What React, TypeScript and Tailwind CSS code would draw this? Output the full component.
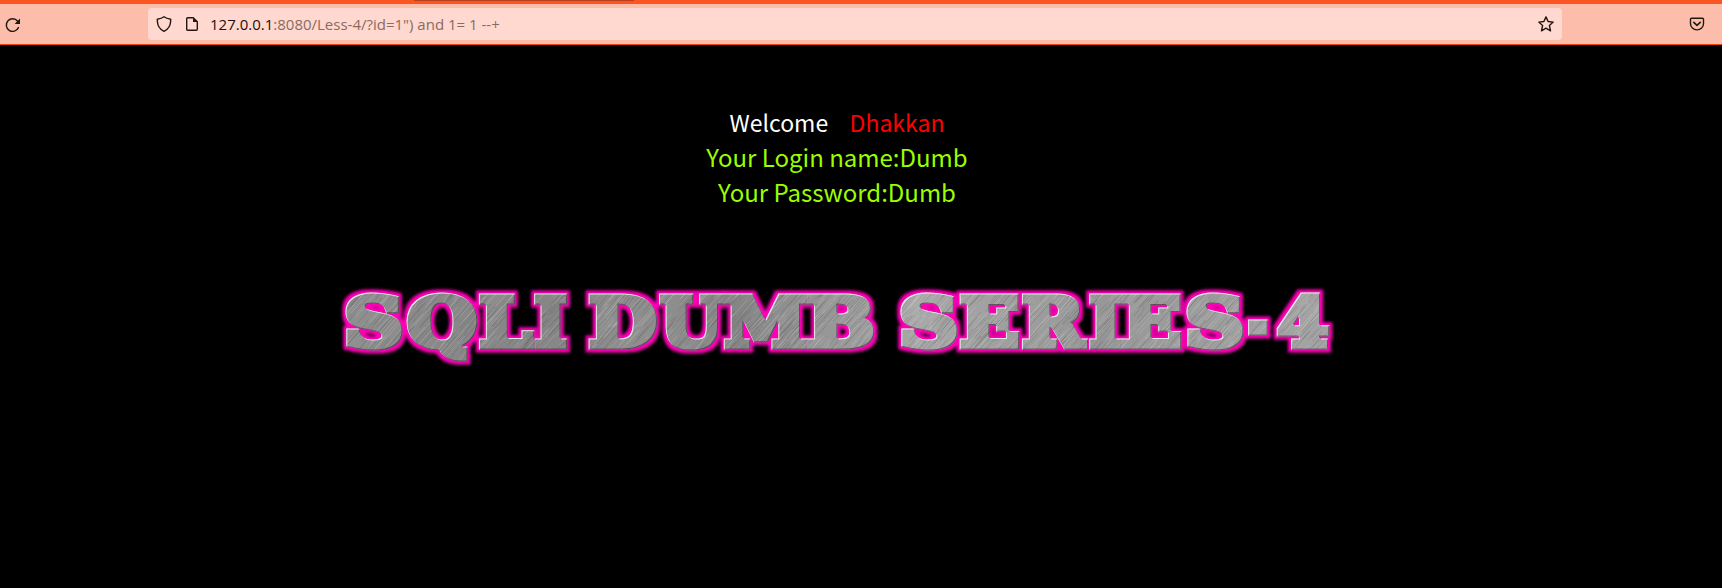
import { useState } from "react";

const FACE = '"DejaVu Serif", serif';
const SIZE = 68;
const STROKE = 7;

// glyph, left edge of ink, ink width
const LETTERS: [string, number, number][] = [
  ["S", 26, 56], ["Q", 87, 70], ["L", 159, 55], ["I", 214, 33], [" ", 248, 20],
  ["D", 269, 68], ["U", 339, 66], ["M", 404, 83], ["B", 487, 67], [" ", 560, 20],
  ["S", 581, 56], ["E", 640, 59], ["R", 702, 66], ["I", 769, 33], ["E", 802, 59],
  ["S", 867, 56], ["-", 927, 22], ["4", 957, 52],
];

function fitLetters() {
  const ctx = document.createElement("canvas").getContext("2d")!;
  ctx.font = `bold 200px ${FACE}`;
  return LETTERS.map(([ch, x, w]) => {
    if (ch === " ") return { ch, x, len: w };
    const m = ctx.measureText(ch);
    const ink = m.actualBoundingBoxLeft + m.actualBoundingBoxRight;
    const k = (w - STROKE) / ink;
    return { ch, x: x + STROKE / 2 + m.actualBoundingBoxLeft * k, len: m.width * k };
  });
}

// short slanted scratches spread over the metal, from a fixed seed
function scratches(seed: number, count: number) {
  let s = seed;
  const next = () => (s = (s * 16807) % 2147483647) / 2147483647;
  let d = "";
  for (let i = 0; i < count; i++) {
    const len = 8 + next() * 34;
    const x = next() * 1034;
    const y = next() * 110 - 10;
    d += `M${x.toFixed(1)} ${y.toFixed(1)}l${(len * 0.66).toFixed(1)} ${(-len * 0.75).toFixed(1)}`;
  }
  return d;
}
const BRIGHT = scratches(4711, 1100);
const DIM = scratches(90210, 1100);

function Banner() {
  const [glyphs] = useState(fitLetters);
  return (
    <svg width="1034" height="100" viewBox="0 0 1034 100" className="block">
      <defs>
        <linearGradient id="metal" x1="0" y1="0" x2="1034" y2="0" gradientUnits="userSpaceOnUse">
          <stop offset="0" stopColor="#929292" />
          <stop offset="0.12" stopColor="#888888" />
          <stop offset="0.22" stopColor="#868686" />
          <stop offset="0.32" stopColor="#909090" />
          <stop offset="0.4" stopColor="#858585" />
          <stop offset="0.58" stopColor="#a8a8a8" />
          <stop offset="0.75" stopColor="#979797" />
          <stop offset="1" stopColor="#a6a6a6" />
        </linearGradient>
        <filter id="bevel" x="0" y="0" width="1034" height="100" filterUnits="userSpaceOnUse" colorInterpolationFilters="sRGB">
          <feMorphology in="SourceAlpha" operator="dilate" radius="3" result="fat" />
          <feGaussianBlur in="fat" stdDeviation="1.8" result="soft" />
          <feFlood floodColor="#ff00b7" />
          <feComposite in2="soft" operator="in" result="glow" />
          <feOffset in="SourceAlpha" dx="1" dy="1" result="se" />
          <feFlood floodColor="#ffffff" floodOpacity=".8" />
          <feComposite in2="SourceAlpha" operator="in" />
          <feComposite in2="se" operator="out" result="light" />
          <feOffset in="SourceAlpha" dx="-1" dy="-1" result="nw" />
          <feFlood floodColor="#402a3c" floodOpacity=".65" />
          <feComposite in2="SourceAlpha" operator="in" />
          <feComposite in2="nw" operator="out" result="dark" />
          <feMerge>
            <feMergeNode in="glow" />
            <feMergeNode in="SourceGraphic" />
            <feMergeNode in="dark" />
            <feMergeNode in="light" />
          </feMerge>
        </filter>
        <pattern id="brushed" width="1034" height="100" patternUnits="userSpaceOnUse">
          <rect width="1034" height="100" fill="url(#metal)" />
          <path d={BRIGHT} stroke="#fff" strokeOpacity=".18" strokeWidth=".8" />
          <path d={DIM} stroke="#333" strokeOpacity=".22" strokeWidth=".8" />
        </pattern>
      </defs>
      <g filter="url(#bevel)">
        <text y="70.7" fontFamily={FACE} fontWeight="bold" fontSize={SIZE} fill="url(#brushed)" stroke="url(#brushed)" strokeWidth={STROKE} xmlSpace="preserve">
          {glyphs.map((g, i) => (
            <tspan key={i} x={g.x} textLength={g.len} lengthAdjust="spacingAndGlyphs">{g.ch}</tspan>
          ))}
        </text>
      </g>
    </svg>
  );
}

const line = { fill: "none", stroke: "#241713", strokeWidth: 1.4, strokeLinejoin: "round", strokeLinecap: "round" } as const;

function Toolbar() {
  return (
    <header className="flex h-[45px] flex-col border-b border-[#f4420f] bg-[#fcbeab]">
      <div className="h-1 shrink-0 bg-[#fb5522]">
        <div className="ml-[414px] h-px w-[220px] bg-[#b9401c]" />
      </div>
      <div className="flex h-10 items-center">
        <svg width="16" height="16" viewBox="0 0 16 16" className="ml-[5px] mt-px">
          <path d="M13.4 10.6A6.3 6.3 0 1 1 12.6 4.2" {...line} />
          <path d="M15 1.6V6.9H9.7Z" fill="#241713" />
        </svg>
        <div className="ml-[127px] flex h-8 w-[1414px] items-center rounded bg-[#ffd9cf]">
          <svg width="16" height="16" viewBox="0 0 16 16" className="ml-2">
            <path d="M8 .8C6.2 2.2 3.7 2.9 1.3 3.3 1.1 8.7 3.1 13.2 8 15.3 12.9 13.2 14.9 8.7 14.7 3.3 12.3 2.9 9.8 2.2 8 .8Z" {...line} />
          </svg>
          <svg width="14" height="16" viewBox="0 0 14 16" className="ml-[13px]">
            <path d="M2.7 1.7H8.2L12.3 5.8V13.3Q12.3 14.3 11.3 14.3H2.7Q1.7 14.3 1.7 13.3V2.7Q1.7 1.7 2.7 1.7Z" {...line} />
            <path d="M8 1.2V6H12.8Z" fill="#241713" />
          </svg>
          <div className="ml-[11px] mt-px whitespace-pre font-['Open_Sans',sans-serif] text-[15px] leading-[31px] text-[#8a6b62]">
            <span className="text-[#1c100c]">127.0.0.1</span>:8080/Less-4/?id=1") and 1= 1 --+
          </div>
          <svg width="16" height="16" viewBox="0 0 16 16" className="ml-auto mr-2">
            <path d="M8 .9 10.1 5.5 15.2 6.1 11.4 9.5 12.5 14.8 8 12.1 3.5 14.8 4.6 9.5 .8 6.1 5.9 5.5Z" {...line} />
          </svg>
        </div>
        <svg width="16" height="16" viewBox="0 0 16 16" className="ml-[127px]">
          <path d="M2.6 2.2H13.4Q14.5 2.2 14.5 3.3V7.7A6.5 6.2 0 0 1 1.5 7.7V3.3Q1.5 2.2 2.6 2.2Z" {...line} />
          <path d="M4.8 6.3 8 9.3 11.2 6.3" {...line} strokeWidth={1.6} />
        </svg>
      </div>
    </header>
  );
}

export default function App() {
  return (
    <div className="h-[588px] overflow-hidden bg-black">
      <Toolbar />
      <main className="flex w-[1674px] flex-col items-center pt-[59px]">
        <div className="whitespace-pre text-center font-['Noto_Sans_CJK_SC',sans-serif] text-[24px] leading-[35px] text-[#99ff00]">
          <div className="h-[35px] text-[23px] leading-[37px] text-white">Welcome   <span className="ml-1.5 text-[#ff0000]">Dhakkan</span></div>
          <div>Your Login name:Dumb</div>
          <div>Your Password:Dumb</div>
        </div>
        <div className="mt-[66px] w-[1034px]">
          <Banner />
        </div>
      </main>
    </div>
  );
}
